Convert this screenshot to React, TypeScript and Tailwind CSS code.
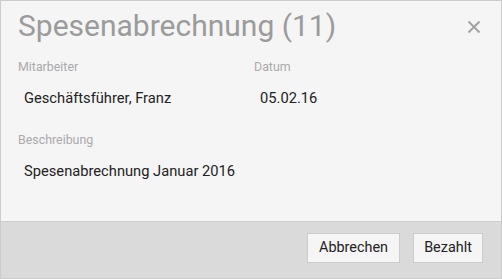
import React from 'react';

function Field({ label, value, className = '' }: { label: string; value: string; className?: string }) {
    return (
        <div className={className}>
            <div className="text-[12.4px] leading-[16px] text-[#aaaaaa]">{label}</div>
            <div className="mt-[13px] pl-[6px] text-[14.7px] leading-[20px] text-[#222222]">{value}</div>
        </div>
    );
}

export default function App() {
    return (
        <div
            className="w-[502px] h-[279px] flex flex-col border border-[#cccccc] bg-[#f5f5f5] overflow-hidden"
            style={{ fontFamily: 'Roboto, "Noto Sans", sans-serif' }}
        >
            {/* Header */}
            <div className="flex items-start justify-between pl-[17px] pr-[20px] pt-[7px]">
                <h1 className="text-[30px] leading-[36px] font-normal text-[#9b9b9b]">Spesenabrechnung (11)</h1>
                <button className="mt-[12px] text-[#a0a0a0]" aria-label="Schließen">
                    <svg width="14" height="14" viewBox="0 0 14 14" fill="none" stroke="currentColor" strokeWidth="1.8">
                        <path d="M1.5 1.5 L12.5 12.5 M12.5 1.5 L1.5 12.5" />
                    </svg>
                </button>
            </div>

            {/* Body */}
            <div className="flex-1 px-[17px]">
                <div className="mt-[15px] flex">
                    <Field label="Mitarbeiter" value="Geschäftsführer, Franz" className="w-[236px]" />
                    <Field label="Datum" value="05.02.16" />
                </div>
                <Field label="Beschreibung" value="Spesenabrechnung Januar 2016" className="mt-[24px]" />
            </div>

            {/* Footer */}
            <div className="h-[57px] border-t border-[#cfcfcf] bg-[#dadada] flex justify-end items-start gap-[13px] pt-[11px] pr-[18px]">
                <button className="w-[93px] h-[30px] border border-[#cccccc] bg-[#f5f5f5] text-[14.4px] text-[#222222]">
                    Abbrechen
                </button>
                <button className="w-[70px] h-[30px] border border-[#cccccc] bg-[#f5f5f5] text-[14.4px] text-[#222222]">
                    Bezahlt
                </button>
            </div>
        </div>
    );
}
